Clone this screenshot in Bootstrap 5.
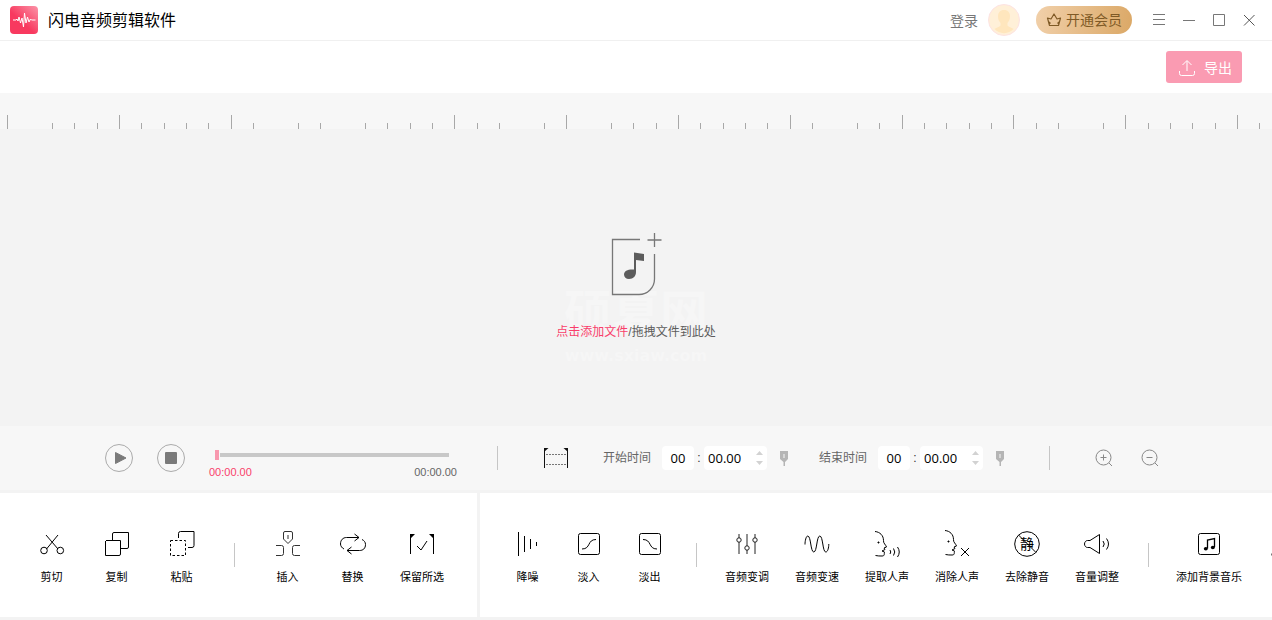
<!DOCTYPE html>
<html lang="zh-CN">
<head>
<meta charset="utf-8">
<meta name="viewport" content="width=device-width, initial-scale=1">
<title>闪电音频剪辑软件</title>
<link href="https://cdn.jsdelivr.net/npm/bootstrap@5.3.0/dist/css/bootstrap.min.css" rel="stylesheet">
<style>
  :root { --accent: #f93e6b; --line: #f0f0f0; --panel: #f7f7f7; --stage: #f3f3f3; }
  body { font-family: "Liberation Sans", "Noto Sans CJK SC", sans-serif; font-size: 12px; line-height: 16px; color: #000; background: var(--stage); }
  svg { display: block; flex: none; fill: none; }
  svg:not([stroke]) { stroke: currentColor; }
  button { font: inherit; }
  .plain { border: 0; padding: 0; background: none; color: inherit; }
  .titlebar { height: 41px; border-bottom: 1px solid var(--line); padding: 0 16px 0 10px; }
  .app-name { font-size: 16px; line-height: 24px; margin-left: 10px; padding-top: 2px; }
  .login { font-size: 14px; color: #777; text-decoration: none; padding-top: 1px; }
  .vip { width: 96px; height: 28px; font-size: 14px; color: #7f5a26; background: linear-gradient(100deg, #f1d0aa, #dba866); margin: 0 20px 0 14px; }
  .win-btns { color: #777; gap: 16px; }
  .actions { height: 52px; padding-right: 30px; }
  .export { width: 76px; height: 32px; border-radius: 3px; font-size: 14px; color: #fff; background: #fa9bb2; gap: 8px; padding: 1px 0 0 2px; }
  .ruler { height: 36px; background: var(--panel); color: #a8a8a8; }
  .stage { min-height: 160px; padding-top: 18px; color: #5c5c5c; }
  .drop { line-height: 17px; }
  .drop-text { margin-top: 28px; }
  .drop a { color: var(--accent); text-decoration: none; }
  .watermark { left: 50%; top: 58px; transform: translateX(-50%); color: #f6f6f6; font-weight: 700; font-size: 48px; line-height: 48px; white-space: nowrap; }
  .watermark small { display: block; font-family: "DejaVu Sans", sans-serif; font-size: 16px; line-height: 20px; margin-top: 8px; }
  .controls { height: 64px; background: var(--panel); padding-left: 105px; color: #666; }
  .round-btn { width: 28px; height: 28px; margin-right: 24px; }
  .seek { width: 248px; font-size: 11px; line-height: 12px; margin-top: 12px; }
  .seek input { appearance: none; display: block; width: 234px; height: 10px; margin: 0 0 6px 6px; background: linear-gradient(#c8c8c8, #c8c8c8) 5px 3px / 229px 4px no-repeat; }
  .seek input::-webkit-slider-thumb { appearance: none; width: 4px; height: 10px; background: #f898ae; border: 0; }
  .now { color: var(--accent); }
  .rule-v { width: 1px; height: 24px; background: #c6c6c6; flex: none; }
  .field { height: 24px; border: 0; border-radius: 4px; background: #fff; font: 13px "Open Sans", sans-serif; color: #000; min-width: 0; }
  .field-m { width: 32px; text-align: center; padding: 0; }
  .field-s { width: 63px; padding: 0 0 0 4px; }
  .colon { width: 10px; text-align: center; color: #333; }
  .spin { right: 4px; top: 5px; }
  .pin { margin-left: 13px; }
  .gap-rule { margin-left: 40px; }
  .gap-range { margin-left: 44px; }
  .gap-start { margin-left: 33px; }
  .gap-end { margin-left: 30px; }
  .gap-field { margin-left: 11px; }
  .gap-zoom { margin-left: 26px; }
  .tools { height: 124px; background: #fff; padding-top: 37px; font-size: 11px; margin-top: 3px; margin-bottom: 3px; overflow: hidden; }
  .tools-edit { width: 477px; padding-left: 19px; margin-right: 3px; flex: none; }
  .tools-fx { padding-left: 17px; min-width: 0; }
  .tools button { display: flex; flex-direction: column; align-items: center; gap: 11px; flex: none; height: 60px; white-space: nowrap; }
  .w-a { width: 65px; } .w-b { width: 74px; } .w-c { width: 61px; } .w-d { width: 70px; } .w-e { width: 90px; }
  .tools .rule-v { margin: 13px 20px 0 20px; }
  .tools-fx .rule-v { margin: 13px 15px 0 16px; }
</style>
</head>
<body class="min-vh-100 d-flex flex-column overflow-x-hidden">

<header class="titlebar bg-white d-flex align-items-center">
  <svg width="28" height="28" viewBox="0 0 28 28" stroke="none">
    <defs><linearGradient id="logoBg" x1="1" y1="0" x2=".45" y2=".6"><stop stop-color="#fb95a9"/><stop offset="1" stop-color="#f8395f"/></linearGradient></defs>
    <rect width="28" height="28" rx="4" fill="url(#logoBg)"/>
    <path d="M3 14h3l1-1 1 2 1-4 1.500 6 1.500-5 1.500 9L14.500 7l1.500 10 1.500-6 1.500 5 1.500-3 1 1h4" stroke="#fff"/>
  </svg>
  <span class="app-name">闪电音频剪辑软件</span>
  <a class="login ms-auto" href="#">登录</a>
  <svg class="ms-2" width="36" height="36" viewBox="0 0 36 36" stroke="none">
    <circle cx="18" cy="18" r="15.500" fill="#fff0d8" stroke="#fde3e3"/>
    <path d="M18 8c4 0 6 2.500 6 6.500 0 3-1 4.500-2.500 6.500v2.500c1 1.500 4 2 6 3.500A13 13 0 0 1 8.500 27c2-1.500 5-2 6-3.500V21C13 19 12 17.500 12 14.500 12 10.500 14 8 18 8z" fill="#ffe6bd"/>
  </svg>
  <button class="plain vip rounded-pill d-flex align-items-center justify-content-center gap-1" type="button">
    <svg width="16" height="16" viewBox="0 0 16 16" stroke-linejoin="round" stroke-width="1.200"><path d="M3.500 13.500 1.500 6l3.500 1 3-5 3 5 3.500-1-2 7.500zM3 10l1.500 1.500M13 10l-1.500 1.500"/></svg>
    开通会员
  </button>
  <div class="win-btns d-flex align-items-center">
    <button class="plain" type="button" aria-label="菜单"><svg width="14" height="14" viewBox="0 0 14 14"><path d="M1 1.500h12M1 6.500h12M1 11.500h12"/></svg></button>
    <button class="plain" type="button" aria-label="最小化"><svg width="14" height="14" viewBox="0 0 14 14"><path d="M1 7.500h12"/></svg></button>
    <button class="plain" type="button" aria-label="最大化"><svg width="14" height="14" viewBox="0 0 14 14"><path d="M1.500 1.500h11v11h-11z"/></svg></button>
    <button class="plain" type="button" aria-label="关闭"><svg width="14" height="14" viewBox="0 0 14 14" stroke="#555"><path d="m2 2 10.500 10.500M12.500 2 2 12.500"/></svg></button>
  </div>
</header>

<div class="actions bg-white d-flex align-items-center justify-content-end">
  <button class="plain export d-flex align-items-center justify-content-center" type="button">
    <svg width="18" height="18" viewBox="0 0 18 18"><path d="M9 12V2M4.500 6 9 1.500 13.500 6M1.500 12v2.500a2 2 0 0 0 2 2h11a2 2 0 0 0 2-2V12"/></svg>
    导出
  </button>
</div>

<div class="ruler">
  <svg class="w-100" height="36" shape-rendering="crispEdges">
    <path d="M7.500 22v14M119.500 22v14M231.500 22v14M454.500 22v14M566.500 22v14M678.500 22v14M790.500 22v14M902.500 22v14M1013.500 22v14M1125.500 22v14M1237.500 22v14"/>
    <path d="M52.500 30v6M74.500 30v6M97.500 30v6M141.500 30v6M164.500 30v6M186.500 30v6M208.500 30v6M253.500 30v6M298.500 30v6M320.500 30v6M365.500 30v6M387.500 30v6M410.500 30v6M432.500 30v6M477.500 30v6M499.500 30v6M544.500 30v6M611.500 30v6M633.500 30v6M656.500 30v6M700.500 30v6M723.500 30v6M745.500 30v6M767.500 30v6M812.500 30v6M857.500 30v6M879.500 30v6M924.500 30v6M946.500 30v6M969.500 30v6M991.500 30v6M1036.500 30v6M1058.500 30v6M1103.500 30v6M1148.500 30v6M1170.500 30v6M1192.500 30v6M1215.500 30v6M1259.500 30v6"/>
  </svg>
</div>

<main class="stage flex-grow-1 d-flex align-items-center justify-content-center">
  <div class="drop position-relative d-flex flex-column align-items-center">
    <div class="watermark position-absolute text-center" aria-hidden="true">硕夏网<small>www.sxiaw.com</small></div>
    <svg class="position-relative" width="52" height="64" viewBox="0 0 52 64">
      <path d="M30 7.500H2.500v55H29A15.500 15.500 0 0 0 44.500 47V22M44.500 1v14M37.500 8h14" stroke="#777" stroke-width="1.300"/>
      <path d="M24 20.500 34 22v7l-8-1v12c0 4-2.500 7-7 7-3 0-5-2-5-4.500 0-3.500 4-5.500 10-5z" fill="#5c5c5c" stroke="none"/>
    </svg>
    <div class="drop-text position-relative"><a href="#">点击添加文件</a>/拖拽文件到此处</div>
  </div>
</main>

<section class="controls d-flex align-items-center">
  <button class="plain round-btn" type="button" aria-label="播放"><svg width="28" height="28" viewBox="0 0 28 28"><circle cx="14" cy="14" r="13.500" stroke="#aaa"/><path d="M10.500 8.500 21 14l-10.500 5.500z" fill="#7a7a7a" stroke="#7a7a7a" stroke-linejoin="round"/></svg></button>
  <button class="plain round-btn" type="button" aria-label="停止"><svg width="28" height="28" viewBox="0 0 28 28"><circle cx="14" cy="14" r="13.500" stroke="#aaa"/><rect x="8" y="8" width="12" height="12" rx="1" fill="#7a7a7a" stroke="none"/></svg></button>
  <div class="seek">
    <input type="range" min="0" max="100" value="0" aria-label="播放进度">
    <div class="d-flex justify-content-between"><span class="now">00:00.00</span><span>00:00.00</span></div>
  </div>
  <span class="rule-v gap-rule"></span>
  <button class="plain gap-range" type="button" aria-label="选区"><svg width="28" height="28" viewBox="0 0 28 28" stroke="#111"><path d="M2.500 4v20M25.500 4v20"/><path d="M2 4h4.500L2 8zM26 4h-4.500L26 8z" fill="#111" stroke="none"/><path d="M4 10.500h20M4 20.500h20" stroke="#777" stroke-dasharray="2 1"/></svg></button>
  <label for="startMin" class="gap-start">开始时间</label>
  <input id="startMin" class="field field-m gap-field" value="00">
  <span class="colon">:</span>
  <div class="position-relative d-flex">
    <input class="field field-s" value="00.00" aria-label="开始秒">
    <svg class="spin position-absolute" width="7" height="14" viewBox="0 0 7 14" stroke="none"><path fill="#d2d2d2" d="M0 4 3.500 0 7 4zM0 10l3.500 4L7 10z"/></svg>
  </div>
  <button class="plain pin" type="button" aria-label="标记开始"><svg width="9" height="16" viewBox="0 0 9 16"><path d="M0 1h8v8l-3 3v4H3.500v-4L0 9z" fill="#b5b5b5" stroke="none"/><path d="M4 4v4" stroke="#f7f7f7"/></svg></button>
  <label for="endMin" class="gap-end">结束时间</label>
  <input id="endMin" class="field field-m gap-field" value="00">
  <span class="colon">:</span>
  <div class="position-relative d-flex">
    <input class="field field-s" value="00.00" aria-label="结束秒">
    <svg class="spin position-absolute" width="7" height="14" viewBox="0 0 7 14" stroke="none"><path fill="#d2d2d2" d="M0 4 3.500 0 7 4zM0 10l3.500 4L7 10z"/></svg>
  </div>
  <button class="plain pin" type="button" aria-label="标记结束"><svg width="9" height="16" viewBox="0 0 9 16"><path d="M0 1h8v8l-3 3v4H3.500v-4L0 9z" fill="#b5b5b5" stroke="none"/><path d="M4 4v4" stroke="#f7f7f7"/></svg></button>
  <span class="rule-v gap-range"></span>
  <button class="plain gap-range" type="button" aria-label="放大"><svg width="20" height="20" viewBox="0 0 20 20" stroke="#888"><circle cx="9.500" cy="9.500" r="7.500"/><path d="m15 15 3 3M6.500 9.500h6M9.500 6.500v6"/></svg></button>
  <button class="plain gap-zoom" type="button" aria-label="缩小"><svg width="20" height="20" viewBox="0 0 20 20" stroke="#888"><circle cx="9.500" cy="9.500" r="7.500"/><path d="m15 15 3 3M6.500 9.500h6"/></svg></button>
</section>

<footer class="d-flex">
  <div class="tools tools-edit d-flex align-items-start">
    <button class="plain w-a" type="button"><svg width="28" height="28" viewBox="0 0 28 28"><path d="m8 5 12 14M20 5 8.500 19"/><circle cx="6" cy="20.500" r="3.300"/><circle cx="22.300" cy="20.500" r="3.300"/></svg>剪切</button>
    <button class="plain w-a" type="button"><svg width="28" height="28" viewBox="0 0 28 28"><path d="M9.500 10V4a1.500 1.500 0 0 1 1.500-1.500h14.500V17a1.500 1.500 0 0 1-1.500 1.500h-6M3 10.500h14.500V24a1.500 1.500 0 0 1-1.500 1.500H2.500V11"/></svg>复制</button>
    <button class="plain w-a" type="button"><svg width="28" height="28" viewBox="0 0 28 28"><path d="M10.500 8V3.500a2 2 0 0 1 2-2h13.500v14a2 2 0 0 1-2 2H20"/><path d="M2.500 10.500h15v15h-15z" stroke-dasharray="2.500 2"/></svg>粘贴</button>
    <span class="rule-v"></span>
    <button class="plain w-a" type="button"><svg width="28" height="28" viewBox="0 0 28 28" stroke="#333"><path d="M11 1.500h6a1.500 1.500 0 0 1 1.500 1.500v6L14 13.500 9.500 9V3A1.500 1.500 0 0 1 11 1.500zM14 5v4M2 15.500h5.500a2 2 0 0 1 2 2v6a2 2 0 0 1-2 2H2M26 15.500h-5.500a2 2 0 0 0-2 2v6a2 2 0 0 0 2 2H26"/></svg>插入</button>
    <button class="plain w-a" type="button"><svg width="28" height="28" viewBox="0 0 28 28"><path d="M5 19c-2-1-3.500-3-3.500-5 0-4 2.500-6.500 6-6.500H20M15.500 4 20 7.500 15.500 11M23 9.500c2 1 3.500 2.500 3.500 5 0 4-2.500 6-6 6H8M12.500 17 8 20.500l4.500 3.500"/></svg>替换</button>
    <button class="plain w-b" type="button"><svg width="28" height="28" viewBox="0 0 28 28"><path d="M2.500 4v20M25.500 4v20M9 16l4 4 6-9"/><path d="M2 4h5L2 9zM26 4h-5l5 5z" fill="#000" stroke="none"/></svg>保留所选</button>
  </div>
  <div class="tools tools-fx flex-grow-1 d-flex align-items-start">
    <button class="plain w-c" type="button"><svg width="28" height="28" viewBox="0 0 28 28" shape-rendering="crispEdges"><path d="M4.500 2v24M10.500 6v16M16.500 9v10M22.500 12v4"/></svg>降噪</button>
    <button class="plain w-c" type="button"><svg width="28" height="28" viewBox="0 0 28 28"><rect x="3.500" y="3.500" width="21" height="21" rx="2"/><path d="M7 19c9 0 5-9.500 14-9.500"/></svg>淡入</button>
    <button class="plain w-c" type="button"><svg width="28" height="28" viewBox="0 0 28 28"><rect x="3.500" y="3.500" width="21" height="21" rx="2"/><path d="M7 9.500c9 0 5 9.500 14 9.500"/></svg>淡出</button>
    <span class="rule-v"></span>
    <button class="plain w-d" type="button"><svg width="28" height="28" viewBox="0 0 28 28" stroke="#222"><path d="M6 4v4M6 12v12M14 4v12M14 20v4M22 4v4M22 12v12"/><circle cx="6" cy="10" r="2.200"/><circle cx="14" cy="18" r="2.200"/><circle cx="22" cy="10" r="2.200"/></svg>音频变调</button>
    <button class="plain w-d" type="button"><svg width="28" height="28" viewBox="0 0 28 28"><path d="M2 14.500C2 11 3 6 4.800 6 8 6 7.500 22 10.800 22S13.500 6 16.800 6 19.500 22 22.800 22c2 0 3-4.500 3-8"/></svg>音频变速</button>
    <button class="plain w-d" type="button"><svg width="28" height="28" viewBox="0 0 28 28"><path d="M2 1.500c5 .5 8.500 4 8.500 9-.500 2.500 2.500 4.500 3 6.500l-2.500 1 1 1.500-3 1.500 2.500 1c-.500 2 .5 4-2.500 4-2.500 0-4 0-6.500-.5M17 20q1.500 2 0 4M20.500 18.500q2.500 3.500 0 7M24.500 17q3.500 5 0 10"/><circle cx="5.500" cy="12.500" r=".6" fill="#000"/></svg>提取人声</button>
    <button class="plain w-d" type="button"><svg width="28" height="28" viewBox="0 0 28 28"><path d="M2 .5c5 .5 8.500 4 8.500 9-.500 2.500 2.500 4.500 3 6.500l-2.500 1 1 1.500-3 1.500 2.500 1c-.500 2 .5 4-2.500 4-2.500 0-4 0-6.500-.5M18 18l8 8M26 18l-8 8"/><circle cx="5.500" cy="11.500" r=".6" fill="#000"/></svg>消除人声</button>
    <button class="plain w-d" type="button"><svg width="28" height="28" viewBox="0 0 28 28"><circle cx="14" cy="14" r="12.300"/><text x="14" y="19" font-size="14" text-anchor="middle" fill="#000" stroke="none">静</text><path d="m5.500 5 17.500 17.500"/></svg>去除静音</button>
    <button class="plain w-d" type="button"><svg width="28" height="28" viewBox="0 0 28 28"><path d="M16.500 4.500v19L7 17.500H4.500c-1.500 0-3-1.500-3-3.500s1.500-3.500 3-3.500H7zM20 11q2.500 3 0 6M23.500 8.500q4 5.500 0 11"/></svg>音量调整</button>
    <span class="rule-v"></span>
    <button class="plain w-e" type="button"><svg width="28" height="28" viewBox="0 0 28 28"><rect x="3.500" y="3.500" width="21" height="21" rx="2"/><path d="M12.500 18.500V10l7-1.500V17" stroke-width="1.300"/><ellipse cx="10.800" cy="18.800" rx="2" ry="1.700" fill="#000" stroke="none"/><ellipse cx="17.800" cy="17.500" rx="2" ry="1.700" fill="#000" stroke="none"/></svg>添加背景音乐</button>
    <svg class="ms-3" width="24" height="28" viewBox="0 0 24 28" stroke="#777"><path d="M1 24.500h23" stroke-width="2"/></svg>
  </div>
</footer>

<script src="https://cdn.jsdelivr.net/npm/bootstrap@5.3.0/dist/js/bootstrap.bundle.min.js"></script>
</body>
</html>
